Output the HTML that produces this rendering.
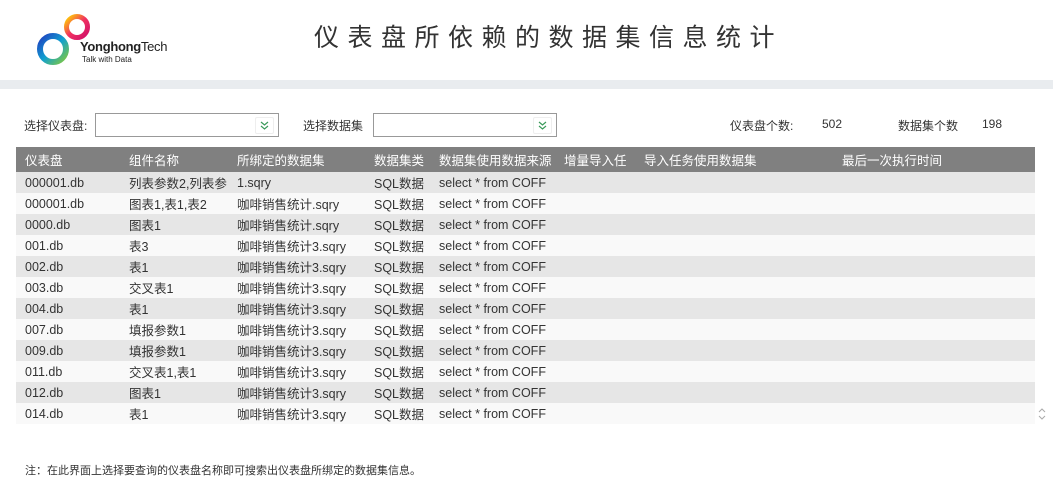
<!DOCTYPE html><html><head><meta charset="utf-8"><style>
*{margin:0;padding:0;box-sizing:border-box}
body{width:1053px;height:489px;background:#fff;font-family:"Liberation Sans","Noto Sans CJK SC",sans-serif;position:relative;overflow:hidden;color:#333}
.a{position:absolute;white-space:nowrap}
.band{position:absolute;left:0;top:80px;width:1053px;height:9px;background:#e9ecef}
.title{left:314px;top:18px;font-size:25px;letter-spacing:8.5px;color:#333}
.lbl{font-size:12px;color:#333}
.sel{position:absolute;height:24px;border:1px solid #999;background:#fff}
.sel i{position:absolute;right:4px;top:3px;width:19px;height:17px;border:1px solid #eee;border-radius:2px}
table{position:absolute;left:16px;top:147px;width:1019px;border-collapse:collapse;font-size:12.5px}
th{background:#808080;color:#fff;font-weight:normal;text-align:left;height:25px;padding:0 0 0 9px;font-size:12.5px}
td{height:21px;padding:0 0 0 9px;white-space:nowrap;overflow:hidden;color:#333}
tbody tr:nth-child(odd) td{background:#e6e6e6}
tbody tr:nth-child(even) td{background:#f9f9f9}
</style></head><body>
<svg class="a" style="left:36px;top:12px" width="56" height="54" viewBox="0 0 56 54">
<defs><linearGradient id="g1" x1="0" y1="0" x2="1" y2="1"><stop offset="0" stop-color="#ffd400"/><stop offset=".5" stop-color="#f03060"/><stop offset="1" stop-color="#d0106a"/></linearGradient>
<linearGradient id="g2" x1="0" y1="0" x2="1" y2="1"><stop offset="0" stop-color="#2040c0"/><stop offset=".5" stop-color="#10a0d0"/><stop offset="1" stop-color="#80c840"/></linearGradient></defs>
<circle cx="41" cy="15" r="10.5" fill="none" stroke="url(#g1)" stroke-width="5"/>
<circle cx="17" cy="37" r="13" fill="none" stroke="url(#g2)" stroke-width="6"/>
</svg>
<div class="a" style="left:80px;top:39px;font-size:13px;font-weight:bold;color:#222;letter-spacing:-0.3px">Yonghong<span style="font-weight:normal">Tech</span></div>
<div class="a" style="left:82px;top:55px;font-size:8px;color:#222">Talk with Data</div>
<div class="a title">仪表盘所依赖的数据集信息统计</div>
<div class="band"></div>
<div class="a lbl" style="left:24px;top:117px">选择仪表盘:</div>
<div class="sel" style="left:95px;top:113px;width:184px"><i><svg width="17" height="15" viewBox="0 0 17 15"><path d="M5 4l3.5 3 3.5-3M5 8l3.5 3 3.5-3" fill="none" stroke="#3a9a5a" stroke-width="1.2"/></svg></i></div>
<div class="a lbl" style="left:303px;top:117px">选择数据集</div>
<div class="sel" style="left:373px;top:113px;width:184px"><i><svg width="17" height="15" viewBox="0 0 17 15"><path d="M5 4l3.5 3 3.5-3M5 8l3.5 3 3.5-3" fill="none" stroke="#3a9a5a" stroke-width="1.2"/></svg></i></div>
<div class="a lbl" style="left:730px;top:117px">仪表盘个数:</div>
<div class="a lbl" style="left:822px;top:117px">502</div>
<div class="a lbl" style="left:898px;top:117px">数据集个数</div>
<div class="a lbl" style="left:982px;top:117px">198</div>
<table>
<thead><tr><th style="width:104px">仪表盘</th><th style="width:108px">组件名称</th><th style="width:137px">所绑定的数据集</th><th style="width:65px">数据集类</th><th style="width:125px">数据集使用数据来源</th><th style="width:80px">增量导入任</th><th style="width:198px">导入任务使用数据集</th><th>最后一次执行时间</th></tr></thead>
<tbody>
<tr><td>000001.db</td><td>列表参数2,列表参</td><td>1.sqry</td><td>SQL数据</td><td>select * from COFF</td><td></td><td></td><td></td></tr>
<tr><td>000001.db</td><td>图表1,表1,表2</td><td>咖啡销售统计.sqry</td><td>SQL数据</td><td>select * from COFF</td><td></td><td></td><td></td></tr>
<tr><td>0000.db</td><td>图表1</td><td>咖啡销售统计.sqry</td><td>SQL数据</td><td>select * from COFF</td><td></td><td></td><td></td></tr>
<tr><td>001.db</td><td>表3</td><td>咖啡销售统计3.sqry</td><td>SQL数据</td><td>select * from COFF</td><td></td><td></td><td></td></tr>
<tr><td>002.db</td><td>表1</td><td>咖啡销售统计3.sqry</td><td>SQL数据</td><td>select * from COFF</td><td></td><td></td><td></td></tr>
<tr><td>003.db</td><td>交叉表1</td><td>咖啡销售统计3.sqry</td><td>SQL数据</td><td>select * from COFF</td><td></td><td></td><td></td></tr>
<tr><td>004.db</td><td>表1</td><td>咖啡销售统计3.sqry</td><td>SQL数据</td><td>select * from COFF</td><td></td><td></td><td></td></tr>
<tr><td>007.db</td><td>填报参数1</td><td>咖啡销售统计3.sqry</td><td>SQL数据</td><td>select * from COFF</td><td></td><td></td><td></td></tr>
<tr><td>009.db</td><td>填报参数1</td><td>咖啡销售统计3.sqry</td><td>SQL数据</td><td>select * from COFF</td><td></td><td></td><td></td></tr>
<tr><td>011.db</td><td>交叉表1,表1</td><td>咖啡销售统计3.sqry</td><td>SQL数据</td><td>select * from COFF</td><td></td><td></td><td></td></tr>
<tr><td>012.db</td><td>图表1</td><td>咖啡销售统计3.sqry</td><td>SQL数据</td><td>select * from COFF</td><td></td><td></td><td></td></tr>
<tr><td>014.db</td><td>表1</td><td>咖啡销售统计3.sqry</td><td>SQL数据</td><td>select * from COFF</td><td></td><td></td><td></td></tr>
</tbody>
</table>
<svg class="a" style="left:1037px;top:407px" width="10" height="14" viewBox="0 0 10 14"><path d="M2 5l3-3 3 3M2 9l3 3 3-3" fill="none" stroke="#aaa" stroke-width="1"/></svg>
<div class="a" style="left:25px;top:462px;font-size:11px;color:#333">注：在此界面上选择要查询的仪表盘名称即可搜索出仪表盘所绑定的数据集信息。</div>
</body></html>
